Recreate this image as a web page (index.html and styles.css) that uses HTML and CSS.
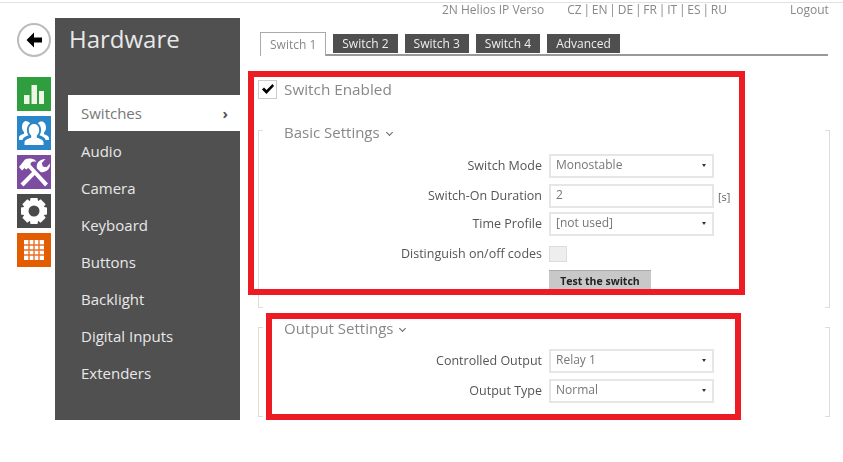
FILE: index.html
```html
<!DOCTYPE html>
<html lang="en">
<head>
<meta charset="UTF-8" />
<meta name="viewport" content="width=device-width, initial-scale=1.0">
<title>Hardware</title>
<link rel="stylesheet" href="styles.css">
</head>
<body>
<div class="page">
  <!-- icon rail -->
  <nav class="rail">
    <div class="back">
      <svg width="22" height="22" viewBox="0 0 22 22"><path d="M11 3.500 3.500 11l7.500 7.500v-5h8v-5h-8z" fill="#000"/></svg>
    </div>
    <div class="tiles">
      <div class="tile green">
        <svg width="20" height="19" viewBox="0 0 20 19"><path d="M0 10h5.500v9H0zM7.500 0H13v19H7.500zM15 6h5v13h-5z" fill="#eef6e6"/></svg>
      </div>
      <div class="tile blue">
        <svg width="30" height="26" viewBox="0 0 30 26"><g fill="#fff"><path d="M15 4c3.200 0 5.200 2.600 5.200 6 0 2.400-1 4.400-2.400 5.500v2.200c3 .9 6.700 2 6.700 4.600V25h-19v-2.700c0-2.600 3.700-3.700 6.700-4.600v-2.200C10.800 14.400 9.800 12.400 9.800 10c0-3.400 2-6 5.200-6z"/><path d="M7.500 1.500c1.600 0 2.800.6 3.600 1.700C9 4.700 7.900 7.200 7.900 10c0 2 .6 3.900 1.700 5.300-2.600.9-5.500 2.200-6.300 4.700H0v-2.500c0-2 3.200-3 5-3.700v-1.900c-1.200-1-2-2.700-2-4.900 0-3.400 1.800-6 4.500-6z"/><path d="M22.500 1.500c2.700 0 4.500 2.600 4.500 6 0 2.200-.8 3.900-2 4.900v1.900c1.800.7 5 1.700 5 3.700V20h-3.300c-.8-2.500-3.700-3.800-6.300-4.700 1.100-1.400 1.700-3.300 1.700-5.300 0-2.800-1.100-5.300-3.200-6.800.8-1.100 2-1.700 3.600-1.700z"/></g></svg>
      </div>
      <div class="tile purple">
        <svg width="32" height="32" viewBox="0 0 32 32"><g fill="#fff"><path d="M1 11 7 3.500c3-1.500 7-1.500 10 .5l1.500 2c-2.500-.7-4.500-.5-5.500.7-.6.8-.5 1.700 0 2.500l17 18.300-3 3L10.500 12 8 13.500 6.500 12 4 14.500z"/><path d="M2.500 27.500 15.500 14.500l2.700 2.900L5.500 30.500zM19 12.500c-1.200-4 1.500-9.500 8.500-9.500l-3.700 4 1 3.500 3.700.8 3.500-3.800c.5 6-4.500 9.500-9.500 8.500z"/></g></svg>
      </div>
      <div class="tile dark">
        <svg width="28" height="28" viewBox="0 0 28 28">
          <g fill="#fff">
            <circle cx="14" cy="14" r="10.500"/>
            <path id="tooth" d="M10.500 1h7l1 6h-9z"/>
            <path d="M10.500 1h7l1 6h-9z" transform="rotate(45 14 14)"/>
            <path d="M10.500 1h7l1 6h-9z" transform="rotate(90 14 14)"/>
            <path d="M10.500 1h7l1 6h-9z" transform="rotate(135 14 14)"/>
            <path d="M10.500 1h7l1 6h-9z" transform="rotate(180 14 14)"/>
            <path d="M10.500 1h7l1 6h-9z" transform="rotate(225 14 14)"/>
            <path d="M10.500 1h7l1 6h-9z" transform="rotate(270 14 14)"/>
            <path d="M10.500 1h7l1 6h-9z" transform="rotate(315 14 14)"/>
          </g>
          <circle cx="14" cy="14" r="5.500" fill="#4a4a4a"/>
        </svg>
      </div>
      <div class="tile orange">
        <svg width="20" height="20" viewBox="0 0 20 20"><path d="M0 0h20v20H0z" fill="#fff"/><path d="M4.300 0h1.400v20H4.300zM9.300 0h1.400v20H9.300zM14.300 0h1.400v20h-1.400zM0 4.300h20v1.400H0zM0 9.300h20v1.400H0zM0 14.300h20v1.400H0z" fill="#e8722a"/></svg>
      </div>
    </div>
  </nav>

  <!-- section menu -->
  <aside class="sidebar">
    <h1>Hardware</h1>
    <ul class="menu">
      <li class="active">Switches <span class="chev">›</span></li>
      <li>Audio</li>
      <li>Camera</li>
      <li>Keyboard</li>
      <li>Buttons</li>
      <li>Backlight</li>
      <li>Digital Inputs</li>
      <li>Extenders</li>
    </ul>
  </aside>

  <main class="main">
    <header class="topbar">
      <span class="device">2N Helios IP Verso</span>
      <span class="langs">CZ | EN | DE | FR | IT | ES | RU</span>
      <span class="logout">Logout</span>
    </header>

    <div class="tabs">
      <div class="tab current">Switch 1</div>
      <div class="tab">Switch 2</div>
      <div class="tab">Switch 3</div>
      <div class="tab">Switch 4</div>
      <div class="tab">Advanced</div>
    </div>

    <label class="enabled"><span class="check"><svg width="14" height="12" viewBox="0 0 14 12"><path d="M1 6.500 3 4.500 5.500 7 11.500 1 13 3 5.500 11z" fill="#000"/></svg></span>Switch Enabled</label>

    <section class="group basic">
      <h2>Basic Settings<span class="caret"></span></h2>
      <div class="form">
        <div class="lbl">Switch Mode</div>
        <div class="field">Monostable<span class="arrow"></span></div>
        <div class="lbl">Switch-On Duration</div>
        <div class="field-row"><div class="field">2</div><span class="unit">[s]</span></div>
        <div class="lbl tight">Time Profile</div>
        <div class="field tight">[not used]<span class="arrow"></span></div>
        <div class="lbl">Distinguish on/off codes</div>
        <div class="box"></div>
        <div></div>
        <div class="test">Test the switch</div>
      </div>
    </section>

    <section class="group output">
      <h2>Output Settings<span class="caret"></span></h2>
      <div class="form">
        <div class="lbl">Controlled Output</div>
        <div class="field">Relay 1<span class="arrow"></span></div>
        <div class="lbl">Output Type</div>
        <div class="field">Normal<span class="arrow"></span></div>
      </div>
    </section>
  </main>

  <!-- red annotations lying over the form -->
  <div class="mark mark-one"></div>
  <div class="mark mark-two"></div>
</div>
</body>
</html>
```

FILE: styles.css
```css
/* page frame */
html, body
{
  margin: 0;
  padding: 0;
  background: #fff;
}
.page
{
  position: relative;
  display: flex;
  width: 843px;
  height: 462px;
  overflow: hidden;
  box-sizing: border-box;
  padding-top: 18px;
  font-family: "Open Sans", sans-serif;
  color: #555;
  filter: blur(0.35px);
}
/* thin line along the top */
.page::before
{
  content: "";
  position: absolute;
  left: 0;
  right: 0;
  top: 2px;
  height: 1px;
  background: #e2e2e2;
}
/* icon rail */
.rail
{
  width: 55px;
  padding-left: 17px;
  box-sizing: border-box;
  flex: none;
}
.back
{
  width: 30px;
  height: 30px;
  margin-top: 5px;
  border: 2px solid #bbb;
  border-radius: 50%;
  display: flex;
  align-items: center;
  justify-content: center;
}
.tiles
{
  display: flex;
  flex-direction: column;
  gap: 5px;
  margin-top: 20px;
}
.tile
{
  width: 34px;
  height: 34px;
  display: flex;
  align-items: center;
  justify-content: center;
}
.green { background: #2f9e3f; }
.blue { background: #2a86c8; }
.purple { background: #7b4ca0; }
.dark { background: #4a4a4a; }
.orange { background: #e35d00; }
/* section menu */
.sidebar
{
  width: 185px;
  height: 402px;
  flex: none;
  background: #505050;
  color: #e8e8e8;
}
.sidebar h1
{
  margin: 0;
  padding: 4px 0 0 14px;
  height: 77px;
  box-sizing: border-box;
  font-size: 24px;
  font-weight: 400;
  line-height: 34px;
}
.menu
{
  list-style: none;
  margin: 0;
  padding: 0 0 0 13px;
}
.menu li
{
  height: 37px;
  line-height: 37px;
  padding-left: 13px;
  font-size: 15px;
}
.menu .active
{
  display: flex;
  justify-content: space-between;
  height: 36px;
  margin-bottom: 2px;
  padding-right: 12px;
  background: #fff;
  color: #777;
}
.chev
{
  font-weight: 700;
  color: #555;
}
/* right hand side */
.main
{
  flex: none;
  width: 603px;
  margin-top: -18px;
  padding-left: 18px;
  box-sizing: border-box;
  position: relative;
}
.topbar
{
  display: flex;
  height: 33px;
  padding-top: 2px;
  box-sizing: border-box;
  font-size: 12px;
  line-height: 16px;
  color: #888;
  white-space: nowrap;
}
.device { margin-left: 184px; }
.langs { margin-left: 23px; word-spacing: -1.300px; }
.logout { margin-left: 63px; }
/* tabs */
.tabs
{
  display: flex;
  align-items: flex-end;
  gap: 7px;
  width: 568px;
  height: 21px;
  margin-left: 2px;
  border-bottom: 2px solid #999;
}
.tab
{
  height: 19px;
  margin-bottom: 1px;
  padding: 0 9px;
  background: #4f4f4f;
  color: #eee;
  font-size: 12px;
  line-height: 19px;
}
.tab.current
{
  height: 23px;
  margin-bottom: -2px;
  padding: 0 9px;
  background: #fff;
  color: #888;
  border: 1px solid #aaa;
  border-bottom: 0;
  line-height: 23px;
}
/* switch enabled */
.enabled
{
  display: flex;
  align-items: center;
  height: 22px;
  margin-top: 22px;
  font-size: 15.300px;
  color: #888;
}
.check
{
  width: 17px;
  height: 17px;
  margin-right: 7px;
  border: 1px solid #ccc;
  display: flex;
  align-items: center;
  justify-content: center;
}
/* settings groups with corner brackets */
.group
{
  position: relative;
  display: flow-root;
  width: 572px;
  box-sizing: border-box;
  padding-left: 26px;
}
.group::before, .group::after
{
  content: "";
  position: absolute;
  top: 0;
  bottom: 0;
  width: 4px;
  border: 1px solid #ddd;
}
.group::before { left: 0; border-right: 0; }
.group::after { right: 0; border-left: 0; }
.basic
{
  margin-top: 30px;
  height: 178px;
}
.output
{
  margin-top: 19px;
  height: 90px;
}
.group h2
{
  margin: 0;
  font-size: 15px;
  font-weight: 400;
  line-height: 22px;
  color: #888;
}
.basic h2 { margin-top: -9px; }
.output h2 { margin-top: -10px; }
/* small chevron after a group heading */
.caret
{
  display: inline-block;
  width: 4px;
  height: 4px;
  margin: 0 0 3px 7px;
  border-right: 1px solid #666;
  border-bottom: 1px solid #666;
  transform: rotate(45deg);
}
/* label and field grid */
.form
{
  display: grid;
  grid-template-columns: 258px 165px;
  column-gap: 7px;
  row-gap: 6px;
  margin-top: 10px;
}
.basic .form { margin-top: 11px; }
.lbl
{
  text-align: right;
  font-size: 12.500px;
  line-height: 24px;
  color: #555;
}
.field
{
  position: relative;
  flex: none;
  width: 165px;
  height: 24px;
  box-sizing: border-box;
  padding-left: 5px;
  border: 2px solid #e6e6e6;
  font-size: 12px;
  line-height: 18px;
  color: #777;
}
.tight { margin-top: -3px; }
.field-row
{
  display: flex;
  gap: 4px;
  white-space: nowrap;
}
.unit
{
  font-size: 11px;
  line-height: 25px;
  color: #666;
}
.arrow
{
  position: absolute;
  right: 6px;
  top: 8px;
  border: 2.500px solid transparent;
  border-top: 3px solid #333;
}
.box
{
  width: 18px;
  height: 16px;
  box-sizing: border-box;
  margin-top: 4px;
  background: #eee;
  border: 1px solid #ddd;
}
.test
{
  width: 102px;
  height: 20px;
  margin-top: -2px;
  background: #c8c8c8;
  border-top: 1px solid #aaa;
  box-sizing: border-box;
  text-align: center;
  font-size: 10.500px;
  font-weight: 700;
  line-height: 20px;
  color: #222;
}
/* red annotation frames */
.mark
{
  position: absolute;
  box-sizing: border-box;
  border: 6px solid #ed1c24;
}
.mark-one
{
  left: 248px;
  top: 71px;
  width: 497px;
  height: 224px;
}
.mark-two
{
  left: 266px;
  top: 313px;
  width: 475px;
  height: 107px;
}
```
